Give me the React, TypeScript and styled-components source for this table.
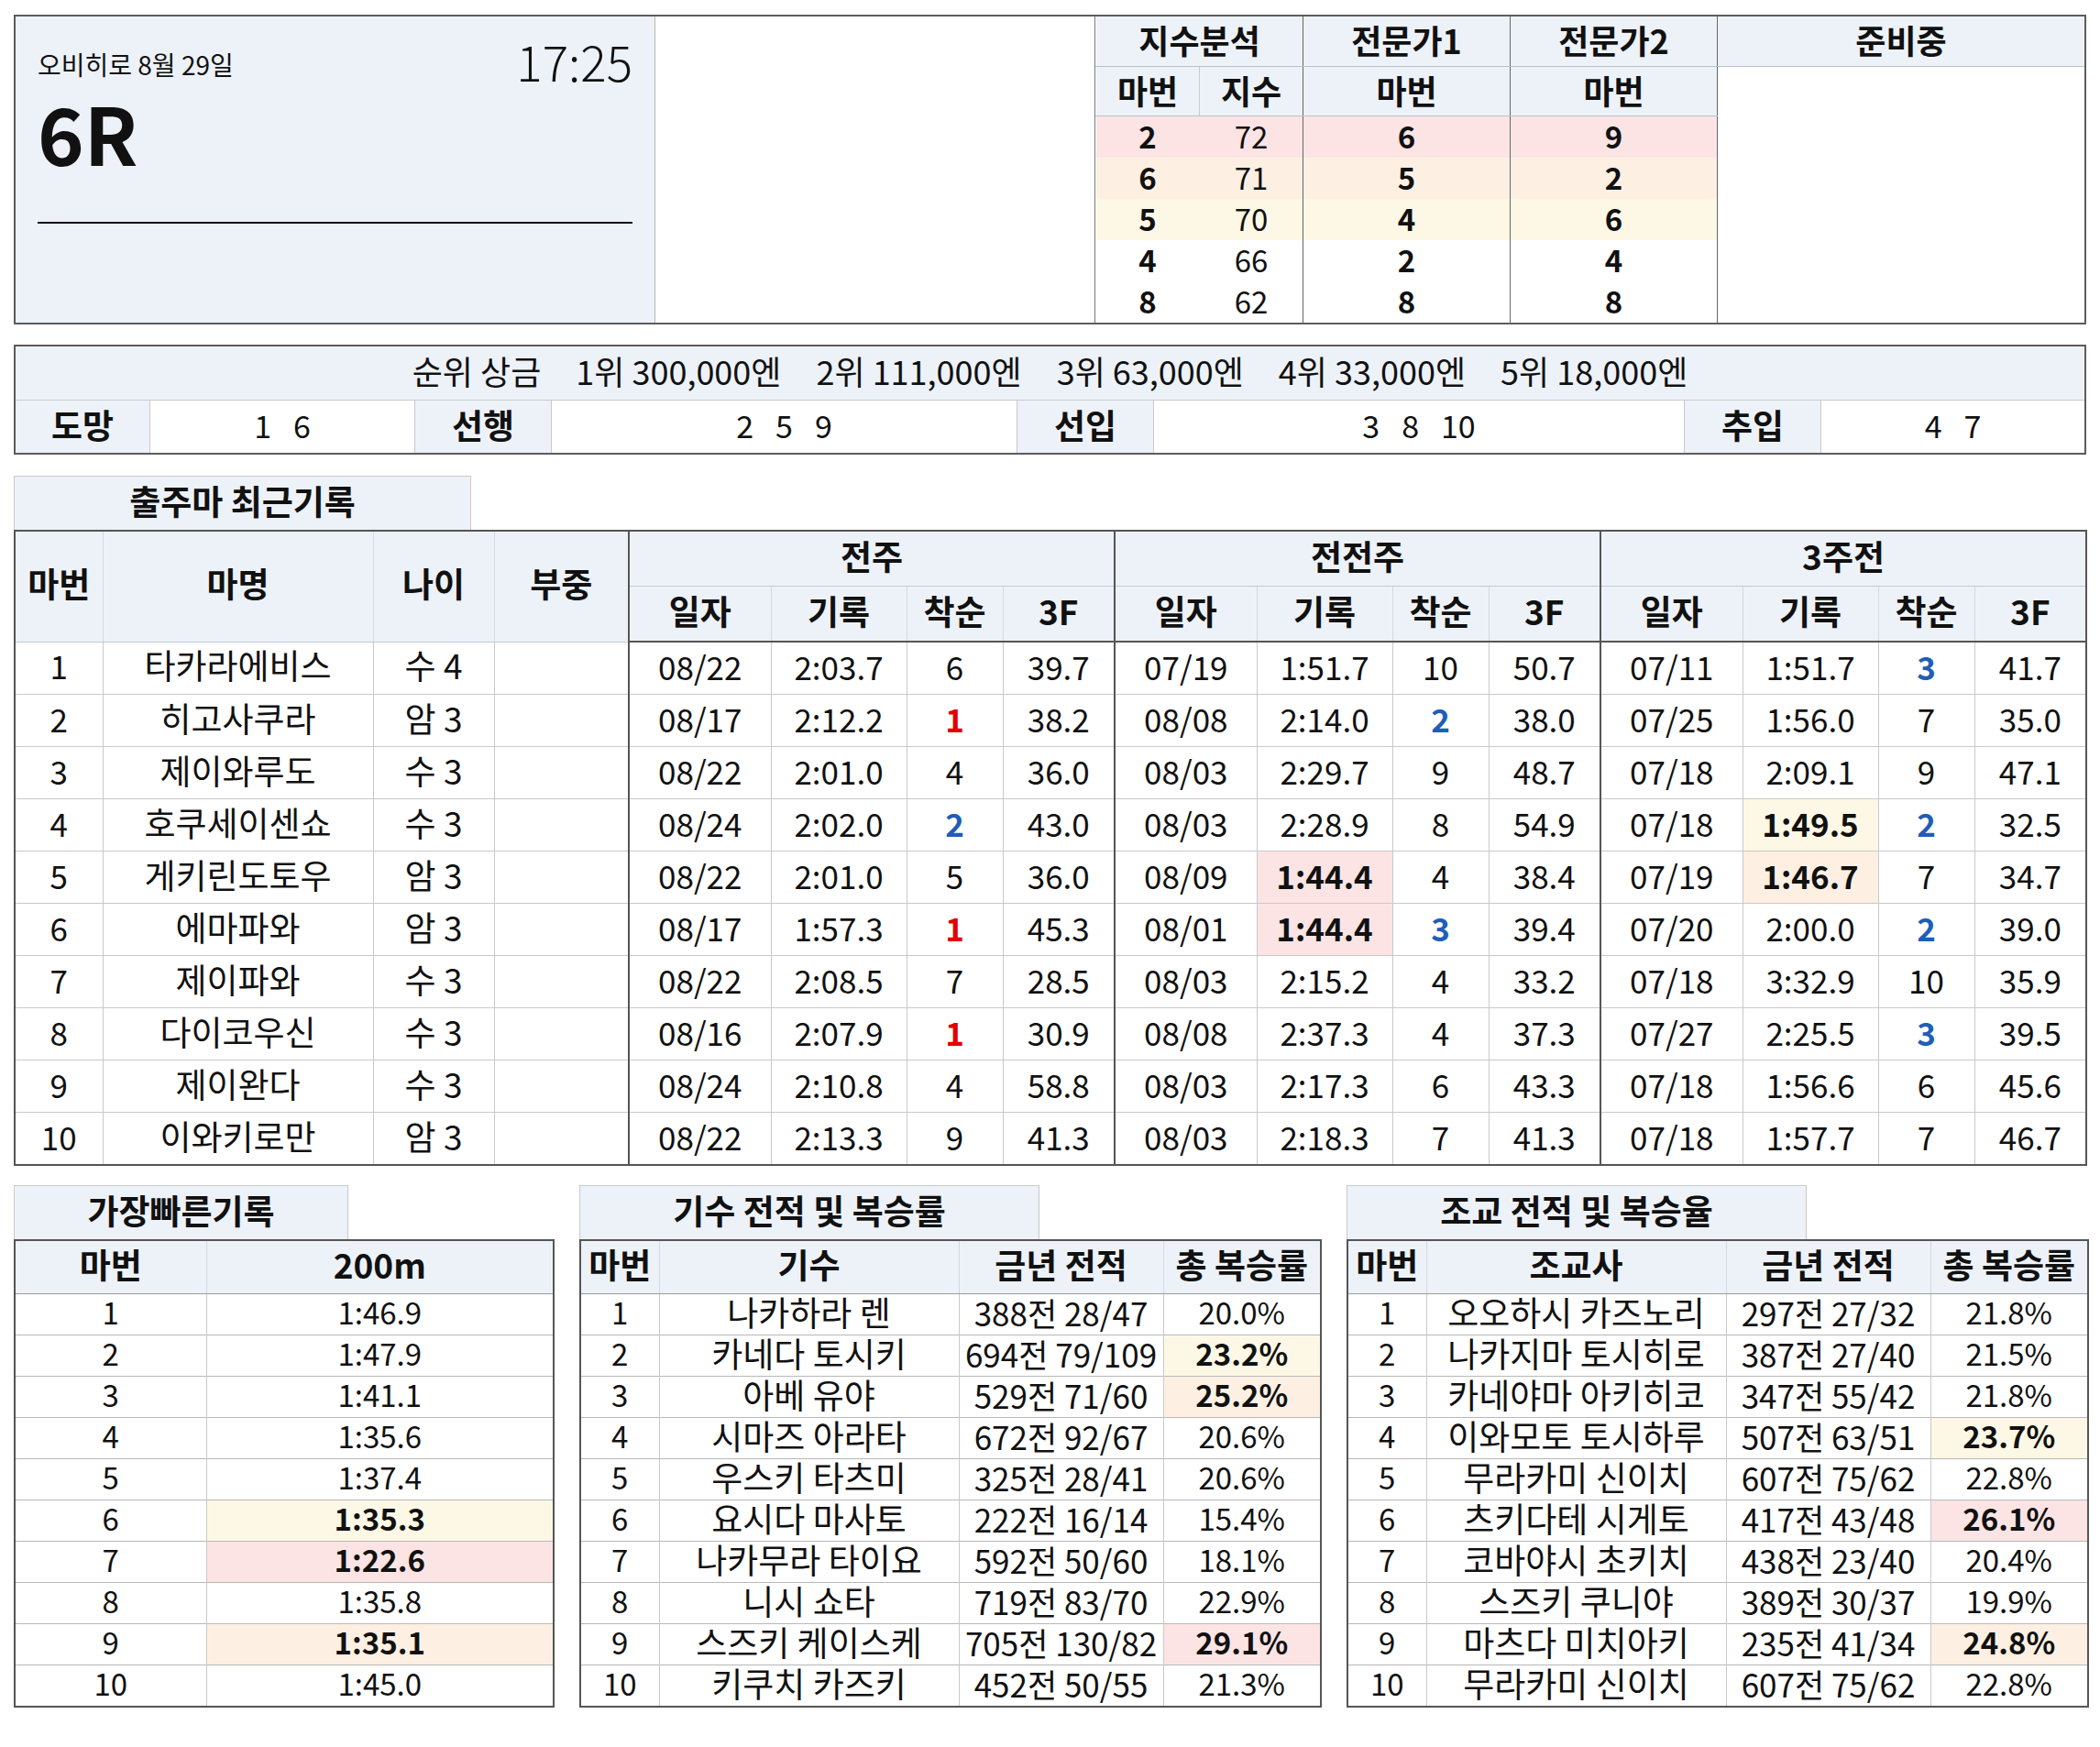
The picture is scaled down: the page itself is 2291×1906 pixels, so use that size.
import React from 'react';
import styled, { createGlobalStyle } from 'styled-components';

const HEAD_BG = '#edf2f9';
const DARK = '#555';
const LIGHT = '#c9c9c9';
const TONES = { pink: '#fce4e4', peach: '#fdf0e3', yellow: '#fdf8e5' };
type Tone = keyof typeof TONES;

const GlobalStyle = createGlobalStyle`
  body {
    margin: 0;
    background: #fff;
    color: #111;
    font-family: "Noto Sans CJK KR", "Noto Sans", sans-serif;
  }
`;

const Page = styled.div`
  width: 2291px;
  box-sizing: border-box;
  padding: 16px 15px 30px;
  display: flex;
  flex-direction: column;
`;

/* ---------- top block ---------- */

const TopBox = styled.div`
  display: flex;
  box-sizing: border-box;
  border: 2px solid #5c5c5c;
`;

const RaceInfo = styled.div`
  width: 698px;
  flex-shrink: 0;
  box-sizing: border-box;
  padding: 22px 24px 0;
  background: ${HEAD_BG};
  border-right: 1px solid #b5b5b5;
`;

const RaceHead = styled.div`
  display: flex;
  justify-content: space-between;
  align-items: center;
`;

const Venue = styled.div`
  font-size: 28px;
  line-height: 1;
  margin-top: 6px;
`;

const StartTime = styled.div`
  font-size: 53px;
  font-weight: 300;
  line-height: 1;
`;

const RaceNo = styled.div`
  margin-top: 8px;
  padding-bottom: 55px;
  font-size: 86px;
  font-weight: 700;
  line-height: 1;
  border-bottom: 2px solid #111;
`;

const Blank = styled.div`
  width: 480px;
  flex-shrink: 0;
  box-sizing: border-box;
  border-right: 1px solid #777;
`;

const IndexWrap = styled.div`
  flex: 1;
  min-width: 0;
`;

const IndexTable = styled.table`
  width: 100%;
  border-collapse: collapse;
  table-layout: fixed;
`;

const Col = styled.col<{ $w?: number }>`
  width: ${p => (p.$w ? `${p.$w}px` : 'auto')};
`;

const IndexHead = styled.th<{ $h: number; $soft?: boolean; $first?: boolean }>`
  height: ${p => p.$h}px;
  padding: 0 0 4px;
  background: ${HEAD_BG};
  font-size: 36px;
  font-weight: 700;
  line-height: 1;
  border-left: 1px solid ${p => (p.$first ? 'transparent' : p.$soft ? '#c3cad4' : '#666')};
  border-bottom: 1px solid #b9c0ca;
`;

const IndexCell = styled.td<{ $tone?: Tone; $light?: boolean; $first?: boolean }>`
  height: 42px;
  padding: 0 0 3px;
  text-align: center;
  font-size: 33px;
  line-height: 1;
  font-weight: ${p => (p.$light ? 400 : 700)};
  background: ${p => (p.$tone ? TONES[p.$tone] : '#fff')};
  border-left: 1px solid ${p => (p.$light || p.$first ? 'transparent' : '#666')};
`;

const ReadyCell = styled.td`
  background: #fff;
  border-left: 1px solid #666;
`;

/* ---------- prize block ---------- */

const PrizeBox = styled.div`
  margin-top: 22px;
  border: 2px solid #5c5c5c;
  display: flex;
  flex-direction: column;
`;

const PrizeLine = styled.div`
  height: 59px;
  padding-bottom: 6px;
  box-sizing: border-box;
  background: ${HEAD_BG};
  border-bottom: 1px solid ${LIGHT};
  display: flex;
  justify-content: center;
  align-items: center;
  gap: 38px;
  font-size: 36px;
  line-height: 1;
`;

const StyleRow = styled.div`
  height: 57px;
  display: grid;
  grid-template-columns: 147px 289px 149px 508px 149px 579px 149px 1fr;
`;

const StyleLabel = styled.div`
  display: flex;
  justify-content: center;
  align-items: center;
  padding-bottom: 4px;
  background: ${HEAD_BG};
  font-size: 37px;
  font-weight: 700;
  line-height: 1;
  border-right: 1px solid ${LIGHT};
`;

const StyleValue = styled.div`
  display: flex;
  justify-content: center;
  align-items: center;
  gap: 24px;
  padding-bottom: 4px;
  font-size: 34px;
  line-height: 1;
  border-right: 1px solid ${LIGHT};
  &:last-child {
    border-right: none;
  }
`;

/* ---------- section tabs ---------- */

const SectionTab = styled.div<{ $w: number }>`
  width: ${p => p.$w}px;
  height: 59px;
  padding-bottom: 5px;
  box-sizing: border-box;
  display: flex;
  justify-content: center;
  align-items: center;
  background: ${HEAD_BG};
  border: 1px solid ${LIGHT};
  border-bottom: none;
  font-size: 37px;
  font-weight: 700;
  line-height: 1;
`;

const RecordSection = styled.section`
  margin-top: 23px;
  display: flex;
  flex-direction: column;
`;

/* ---------- recent record table ---------- */

const RecordTable = styled.table`
  width: 2261px;
  border-collapse: collapse;
  table-layout: fixed;
  border: 2px solid ${DARK};
`;

const HeadCell = styled.th<{ $edge?: boolean }>`
  height: 53px;
  padding: 0 0 6px;
  background: ${HEAD_BG};
  font-size: 37px;
  font-weight: 700;
  line-height: 1;
  border-left: ${p => (p.$edge ? `2px solid ${DARK}` : '1px solid #d3d9e2')};
  border-bottom: 1px solid #c3cad4;
`;

const HeadRow = styled.tr`
  &:last-child th {
    border-bottom: 2px solid ${DARK};
  }
`;

const Cell = styled.td<{ $edge?: boolean; $tone?: Tone; $bold?: boolean; $color?: string; $ko?: boolean }>`
  height: 50px;
  padding: 0 0 6px;
  text-align: center;
  white-space: nowrap;
  font-size: ${p => (p.$ko ? 37 : 35)}px;
  line-height: 1;
  font-weight: ${p => (p.$bold ? 700 : 400)};
  color: ${p => p.$color || '#111'};
  background: ${p => (p.$tone ? TONES[p.$tone] : '#fff')};
  border-left: ${p => (p.$edge ? `2px solid ${DARK}` : `1px solid ${LIGHT}`)};
  border-top: 1px solid ${LIGHT};
`;

/* ---------- bottom tables ---------- */

const BottomRow = styled.div`
  margin-top: 21px;
  display: flex;
  gap: 27px;
`;

const Panel = styled.div`
  display: flex;
  flex-direction: column;
`;

const MiniTable = styled.table<{ $w: number }>`
  width: ${p => p.$w}px;
  border-collapse: collapse;
  table-layout: fixed;
  border: 2px solid ${DARK};
`;

const MiniHead = styled.th`
  height: 51px;
  padding: 0 0 6px;
  background: ${HEAD_BG};
  font-size: 37px;
  font-weight: 700;
  line-height: 1;
  white-space: nowrap;
  border-left: 1px solid #d3d9e2;
  border-bottom: 1px solid #9a9a9a;
`;

const MiniCell = styled.td<{ $tone?: Tone; $bold?: boolean; $size?: number }>`
  height: 39px;
  padding: 0 0 5px;
  text-align: center;
  white-space: nowrap;
  font-size: ${p => p.$size ?? 33}px;
  line-height: 1;
  font-weight: ${p => (p.$bold ? 700 : 400)};
  background: ${p => (p.$tone ? TONES[p.$tone] : '#fff')};
  border-left: 1px solid ${LIGHT};
  border-top: 1px solid #b8b8b8;
`;

/* ---------- data ---------- */

const indexRows: [string, string, string, string, Tone?][] = [
  ['2', '72', '6', '9', 'pink'],
  ['6', '71', '5', '2', 'peach'],
  ['5', '70', '4', '6', 'yellow'],
  ['4', '66', '2', '4'],
  ['8', '62', '8', '8'],
];

const prizes = ['1위 300,000엔', '2위 111,000엔', '3위 63,000엔', '4위 33,000엔', '5위 18,000엔'];

const styles: [string, string[]][] = [
  ['도망', ['1', '6']],
  ['선행', ['2', '5', '9']],
  ['선입', ['3', '8', '10']],
  ['추입', ['4', '7']],
];

type Run = [string, string, string, string, Tone?];
type Horse = { no: number; name: string; age: string; runs: Run[] };

const horses: Horse[] = [
  { no: 1, name: '타카라에비스', age: '수 4', runs: [['08/22', '2:03.7', '6', '39.7'], ['07/19', '1:51.7', '10', '50.7'], ['07/11', '1:51.7', '3', '41.7']] },
  { no: 2, name: '히고사쿠라', age: '암 3', runs: [['08/17', '2:12.2', '1', '38.2'], ['08/08', '2:14.0', '2', '38.0'], ['07/25', '1:56.0', '7', '35.0']] },
  { no: 3, name: '제이와루도', age: '수 3', runs: [['08/22', '2:01.0', '4', '36.0'], ['08/03', '2:29.7', '9', '48.7'], ['07/18', '2:09.1', '9', '47.1']] },
  { no: 4, name: '호쿠세이센쇼', age: '수 3', runs: [['08/24', '2:02.0', '2', '43.0'], ['08/03', '2:28.9', '8', '54.9'], ['07/18', '1:49.5', '2', '32.5', 'yellow']] },
  { no: 5, name: '게키린도토우', age: '암 3', runs: [['08/22', '2:01.0', '5', '36.0'], ['08/09', '1:44.4', '4', '38.4', 'pink'], ['07/19', '1:46.7', '7', '34.7', 'peach']] },
  { no: 6, name: '에마파와', age: '암 3', runs: [['08/17', '1:57.3', '1', '45.3'], ['08/01', '1:44.4', '3', '39.4', 'pink'], ['07/20', '2:00.0', '2', '39.0']] },
  { no: 7, name: '제이파와', age: '수 3', runs: [['08/22', '2:08.5', '7', '28.5'], ['08/03', '2:15.2', '4', '33.2'], ['07/18', '3:32.9', '10', '35.9']] },
  { no: 8, name: '다이코우신', age: '수 3', runs: [['08/16', '2:07.9', '1', '30.9'], ['08/08', '2:37.3', '4', '37.3'], ['07/27', '2:25.5', '3', '39.5']] },
  { no: 9, name: '제이완다', age: '수 3', runs: [['08/24', '2:10.8', '4', '58.8'], ['08/03', '2:17.3', '6', '43.3'], ['07/18', '1:56.6', '6', '45.6']] },
  { no: 10, name: '이와키로만', age: '암 3', runs: [['08/22', '2:13.3', '9', '41.3'], ['08/03', '2:18.3', '7', '41.3'], ['07/18', '1:57.7', '7', '46.7']] },
];

const rankColor = (r: string) => (r === '1' ? '#e00000' : r === '2' || r === '3' ? '#1f5eb8' : undefined);

const fastest: [string, Tone?][] = [
  ['1:46.9'], ['1:47.9'], ['1:41.1'], ['1:35.6'], ['1:37.4'],
  ['1:35.3', 'yellow'], ['1:22.6', 'pink'], ['1:35.8'], ['1:35.1', 'peach'], ['1:45.0'],
];

type Person = [string, string, string, Tone?];

const jockeys: Person[] = [
  ['나카하라 렌', '388전 28/47', '20.0%'],
  ['카네다 토시키', '694전 79/109', '23.2%', 'yellow'],
  ['아베 유야', '529전 71/60', '25.2%', 'peach'],
  ['시마즈 아라타', '672전 92/67', '20.6%'],
  ['우스키 타츠미', '325전 28/41', '20.6%'],
  ['요시다 마사토', '222전 16/14', '15.4%'],
  ['나카무라 타이요', '592전 50/60', '18.1%'],
  ['니시 쇼타', '719전 83/70', '22.9%'],
  ['스즈키 케이스케', '705전 130/82', '29.1%', 'pink'],
  ['키쿠치 카즈키', '452전 50/55', '21.3%'],
];

const trainers: Person[] = [
  ['오오하시 카즈노리', '297전 27/32', '21.8%'],
  ['나카지마 토시히로', '387전 27/40', '21.5%'],
  ['카네야마 아키히코', '347전 55/42', '21.8%'],
  ['이와모토 토시하루', '507전 63/51', '23.7%', 'yellow'],
  ['무라카미 신이치', '607전 75/62', '22.8%'],
  ['츠키다테 시게토', '417전 43/48', '26.1%', 'pink'],
  ['코바야시 초키치', '438전 23/40', '20.4%'],
  ['스즈키 쿠니야', '389전 30/37', '19.9%'],
  ['마츠다 미치아키', '235전 41/34', '24.8%', 'peach'],
  ['무라카미 신이치', '607전 75/62', '22.8%'],
];

const groupCols = [155, 148, 105, 122];

const PersonTable = ({ title, role, rows }: { title: string; role: string; rows: Person[] }) => (
  <Panel>
    <SectionTab $w={502}>{title}</SectionTab>
    <MiniTable $w={808}>
      <colgroup>
        <Col $w={86} />
        <Col $w={327} />
        <Col $w={223} />
        <Col $w={172} />
      </colgroup>
      <thead>
        <tr>
          <MiniHead>마번</MiniHead>
          <MiniHead>{role}</MiniHead>
          <MiniHead>금년 전적</MiniHead>
          <MiniHead>총 복승률</MiniHead>
        </tr>
      </thead>
      <tbody>
        {rows.map(([name, record, rate, tone], i) => (
          <tr key={i}>
            <MiniCell>{i + 1}</MiniCell>
            <MiniCell $size={37}>{name}</MiniCell>
            <MiniCell $size={35}>{record}</MiniCell>
            <MiniCell $tone={tone} $bold={!!tone}>{rate}</MiniCell>
          </tr>
        ))}
      </tbody>
    </MiniTable>
  </Panel>
);

const App = () => {
  return (
    <>
      <GlobalStyle />
      <Page>
        <TopBox>
          <RaceInfo>
            <RaceHead>
              <Venue>오비히로 8월 29일</Venue>
              <StartTime>17:25</StartTime>
            </RaceHead>
            <RaceNo>6R</RaceNo>
          </RaceInfo>
          <Blank />
          <IndexWrap>
            <IndexTable>
              <colgroup>
                <Col $w={113} />
                <Col $w={113} />
                <Col $w={226} />
                <Col $w={226} />
                <Col />
              </colgroup>
              <tbody>
                <tr>
                  <IndexHead $h={50} colSpan={2} $first>지수분석</IndexHead>
                  <IndexHead $h={50}>전문가1</IndexHead>
                  <IndexHead $h={50}>전문가2</IndexHead>
                  <IndexHead $h={50}>준비중</IndexHead>
                </tr>
                <tr>
                  <IndexHead $h={49} $first>마번</IndexHead>
                  <IndexHead $h={49} $soft>지수</IndexHead>
                  <IndexHead $h={49}>마번</IndexHead>
                  <IndexHead $h={49}>마번</IndexHead>
                  <ReadyCell rowSpan={6} />
                </tr>
                {indexRows.map(([no, score, e1, e2, tone], i) => (
                  <tr key={i}>
                    <IndexCell $tone={tone} $first>{no}</IndexCell>
                    <IndexCell $tone={tone} $light>{score}</IndexCell>
                    <IndexCell $tone={tone}>{e1}</IndexCell>
                    <IndexCell $tone={tone}>{e2}</IndexCell>
                  </tr>
                ))}
              </tbody>
            </IndexTable>
          </IndexWrap>
        </TopBox>

        <PrizeBox>
          <PrizeLine>
            <span>순위 상금</span>
            {prizes.map(p => (
              <span key={p}>{p}</span>
            ))}
          </PrizeLine>
          <StyleRow>
            {styles.map(([label, nums]) => (
              <React.Fragment key={label}>
                <StyleLabel>{label}</StyleLabel>
                <StyleValue>
                  {nums.map(n => (
                    <span key={n}>{n}</span>
                  ))}
                </StyleValue>
              </React.Fragment>
            ))}
          </StyleRow>
        </PrizeBox>

        <RecordSection>
          <SectionTab $w={499}>출주마 최근기록</SectionTab>
          <RecordTable>
            <colgroup>
              <Col $w={96} />
              <Col $w={295} />
              <Col $w={132} />
              <Col $w={147} />
              {[0, 1, 2].map(g => groupCols.map((w, j) => <Col key={`${g}-${j}`} $w={w} />))}
            </colgroup>
            <thead>
              <HeadRow>
                <HeadCell rowSpan={2}>마번</HeadCell>
                <HeadCell rowSpan={2}>마명</HeadCell>
                <HeadCell rowSpan={2}>나이</HeadCell>
                <HeadCell rowSpan={2}>부중</HeadCell>
                <HeadCell colSpan={4} $edge>전주</HeadCell>
                <HeadCell colSpan={4} $edge>전전주</HeadCell>
                <HeadCell colSpan={4} $edge>3주전</HeadCell>
              </HeadRow>
              <HeadRow>
                {[0, 1, 2].map(g =>
                  ['일자', '기록', '착순', '3F'].map((h, j) => (
                    <HeadCell key={`${g}-${h}`} $edge={j === 0}>{h}</HeadCell>
                  ))
                )}
              </HeadRow>
            </thead>
            <tbody>
              {horses.map(h => (
                <tr key={h.no}>
                  <Cell>{h.no}</Cell>
                  <Cell $ko>{h.name}</Cell>
                  <Cell $ko>{h.age}</Cell>
                  <Cell />
                  {h.runs.map(([date, time, rank, f3, tone], g) => (
                    <React.Fragment key={g}>
                      <Cell $edge>{date}</Cell>
                      <Cell $tone={tone} $bold={!!tone}>{time}</Cell>
                      <Cell $color={rankColor(rank)} $bold={!!rankColor(rank)}>{rank}</Cell>
                      <Cell>{f3}</Cell>
                    </React.Fragment>
                  ))}
                </tr>
              ))}
            </tbody>
          </RecordTable>
        </RecordSection>

        <BottomRow>
          <Panel>
            <SectionTab $w={365}>가장빠른기록</SectionTab>
            <MiniTable $w={588}>
              <colgroup>
                <Col $w={209} />
                <Col $w={379} />
              </colgroup>
              <thead>
                <tr>
                  <MiniHead>마번</MiniHead>
                  <MiniHead>200m</MiniHead>
                </tr>
              </thead>
              <tbody>
                {fastest.map(([time, tone], i) => (
                  <tr key={i}>
                    <MiniCell>{i + 1}</MiniCell>
                    <MiniCell $tone={tone} $bold={!!tone}>{time}</MiniCell>
                  </tr>
                ))}
              </tbody>
            </MiniTable>
          </Panel>
          <PersonTable title="기수 전적 및 복승률" role="기수" rows={jockeys} />
          <PersonTable title="조교 전적 및 복승율" role="조교사" rows={trainers} />
        </BottomRow>
      </Page>
    </>
  );
};

export default App;
